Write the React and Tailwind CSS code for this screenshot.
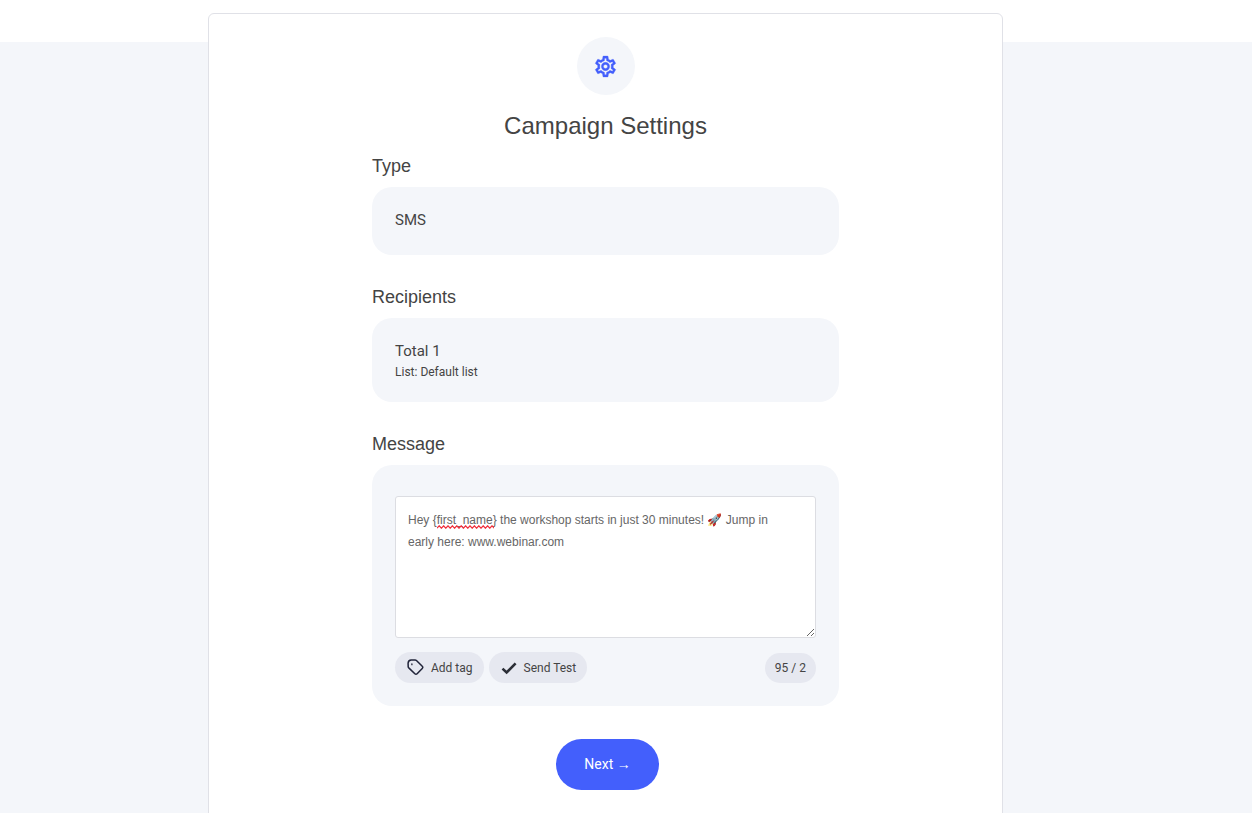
import React, { useState } from "react";

const INITIAL_MESSAGE =
  "Hey {first_name} the workshop starts in just 30 minutes! 🚀 Jump in early here: www.webinar.com";

const SMS_PARTS = 2;

export default function App() {
  const [message, setMessage] = useState(INITIAL_MESSAGE);

  return (
    <div className="min-h-screen bg-[#f4f6fa] font-[Roboto,sans-serif] text-[#444]">
      <header className="h-[42px] bg-white" />
      <main className="-mt-[29px] pr-[41px]">
        <div className="mx-auto flex min-h-[820px] max-w-[795px] flex-col items-center rounded-t-md border border-[#e0e1e7] bg-white px-6 pt-[23px] pb-8">
          <div className="flex size-[58px] items-center justify-center rounded-full bg-[#f4f6fa]">
            <GearIcon />
          </div>
          <h1 className="mt-4 font-['Liberation_Sans',Arial,sans-serif] text-[24px] leading-[30px]">
            Campaign Settings
          </h1>

          <div className="mt-[14px] w-full max-w-[467px] space-y-[31px]">
            <Section title="Type">
              <div className="pt-[21px] pb-[23px]">
                <p className="text-[15px] leading-6">SMS</p>
              </div>
            </Section>

            <Section title="Recipients">
              <div className="py-[21px]">
                <p className="text-[15px] leading-6">Total 1</p>
                <p className="text-[12px] leading-[18px]">List: Default list</p>
              </div>
            </Section>

            <Section title="Message">
              <div className="pt-[31px] pb-[23px]">
                <MessageBox value={message} onChange={setMessage} />
                <div className="mt-[14px] flex items-center gap-[5px]">
                  <PillButton>
                    <TagIcon />
                    Add tag
                  </PillButton>
                  <PillButton>
                    <CheckIcon />
                    Send Test
                  </PillButton>
                  <span className="ml-auto rounded-full bg-[#e6e8f0] px-[10px] text-[12px] leading-[30px]">
                    {message.length} / {SMS_PARTS}
                  </span>
                </div>
              </div>
            </Section>
          </div>

          <button
            type="button"
            className="mt-[33px] ml-1 rounded-full bg-[#435ffc] px-7 text-[14px] leading-[51px] text-white"
          >
            Next <span className="font-['Liberation_Sans',Arial,sans-serif]">→</span>
          </button>
        </div>
      </main>
    </div>
  );
}

function Section({ title, children }) {
  return (
    <section>
      <h2 className="font-['Liberation_Sans',Arial,sans-serif] text-[18px] leading-[22px]">{title}</h2>
      <div className="mt-[10px] rounded-[20px] bg-[#f4f6fa] px-[23px]">{children}</div>
    </section>
  );
}

function MessageBox({ value, onChange }) {
  return (
    <div className="relative font-['Liberation_Sans',Arial,sans-serif] text-[12px] leading-[22px]">
      <textarea
        aria-label="Message"
        spellCheck={false}
        value={value}
        onChange={(e) => onChange(e.target.value)}
        className="block h-[142px] w-full resize-y rounded-[3px] border border-[#dcdde2] bg-white py-3 pr-8 pl-3 text-[#666] outline-none"
      />
      {value.startsWith("Hey {first_name}") && <Squiggle />}
    </div>
  );
}

// Spelling mark below the {first_name} tag
function Squiggle() {
  return (
    <svg
      className="pointer-events-none absolute top-[29px] left-[42px] h-1 w-[57px]"
      viewBox="0 0 57 4"
      fill="none"
      stroke="#f0303c"
      strokeWidth="1.2"
      aria-hidden="true"
    >
      <path d={"M0 3.2" + "l2.2-2.4l2.2 2.4".repeat(13)} />
    </svg>
  );
}

function PillButton({ children }) {
  return (
    <button
      type="button"
      className="flex h-[31px] items-center gap-[6px] rounded-full bg-[#e6e8f0] px-[11px] text-[12px]"
    >
      {children}
    </button>
  );
}

function GearIcon() {
  return (
    <svg viewBox="0 0 24 24" className="size-[25px]" fill="#435ffc" stroke="#435ffc" strokeWidth="0.3" aria-hidden="true">
      <path d="M19.43 12.98c.04-.32.07-.64.07-.98 0-.34-.03-.66-.07-.98l2.11-1.65c.19-.15.24-.42.12-.64l-2-3.46a.5.5 0 0 0-.61-.22l-2.49 1c-.52-.4-1.08-.73-1.69-.98l-.38-2.65A.488.488 0 0 0 14 2h-4c-.25 0-.46.18-.49.42l-.38 2.65c-.61.25-1.17.59-1.69.98l-2.49-1a.5.5 0 0 0-.61.22l-2 3.46c-.13.22-.07.49.12.64l2.11 1.65c-.04.32-.07.65-.07.98 0 .33.03.66.07.98l-2.11 1.65c-.19.15-.24.42-.12.64l2 3.46a.5.5 0 0 0 .61.22l2.49-1c.52.4 1.08.73 1.69.98l.38 2.65c.03.24.24.42.49.42h4c.25 0 .46-.18.49-.42l.38-2.65c.61-.25 1.17-.59 1.69-.98l2.49 1a.5.5 0 0 0 .61-.22l2-3.46c.12-.22.07-.49-.12-.64l-2.11-1.65zm-1.98-1.71c.04.31.05.52.05.73 0 .21-.02.43-.05.73l-.14 1.13.89.7 1.08.84-.7 1.21-1.27-.51-1.04-.42-.9.68c-.43.32-.84.56-1.25.73l-1.06.43-.16 1.13-.2 1.35h-1.4l-.19-1.35-.16-1.13-1.06-.43c-.43-.18-.83-.41-1.23-.71l-.91-.7-1.06.43-1.27.51-.7-1.21 1.08-.84.89-.7-.14-1.13c-.03-.31-.05-.54-.05-.74s.02-.43.05-.73l.14-1.13-.89-.7-1.08-.84.7-1.21 1.27.51 1.04.42.9-.68c.43-.32.84-.56 1.25-.73l1.06-.43.16-1.13.2-1.35h1.39l.19 1.35.16 1.13 1.06.43c.43.18.83.41 1.23.71l.91.7 1.06-.43 1.27-.51.7 1.21-1.07.85-.89.7.14 1.13zM12 8a4 4 0 1 0 0 8 4 4 0 0 0 0-8zm0 6a2 2 0 1 1 0-4 2 2 0 0 1 0 4z" />
    </svg>
  );
}

function TagIcon() {
  return (
    <svg viewBox="0 0 20 20" className="size-[19px]" fill="none" stroke="#22253a" strokeLinejoin="round" aria-hidden="true">
      <path
        strokeWidth="1.6"
        d="M2.2 5.6q.2-3.2 3.3-3.4l4-.2q.9 0 1.5.6l6.1 6q1.2 1.2 0 2.4l-5.4 5.6q-1.2 1.2-2.4 0l-6.1-5.9q-.9-.8-.9-1.6z"
      />
      <path strokeWidth="1.4" strokeLinecap="round" d="M6.2 6.2v.8" />
    </svg>
  );
}

function CheckIcon() {
  return (
    <svg viewBox="0 0 18 18" className="size-[18px]" fill="none" stroke="#2b2e36" strokeWidth="2.6" aria-hidden="true">
      <path d="M2.5 9.6l4.1 3.9L15.6 4.4" />
    </svg>
  );
}
